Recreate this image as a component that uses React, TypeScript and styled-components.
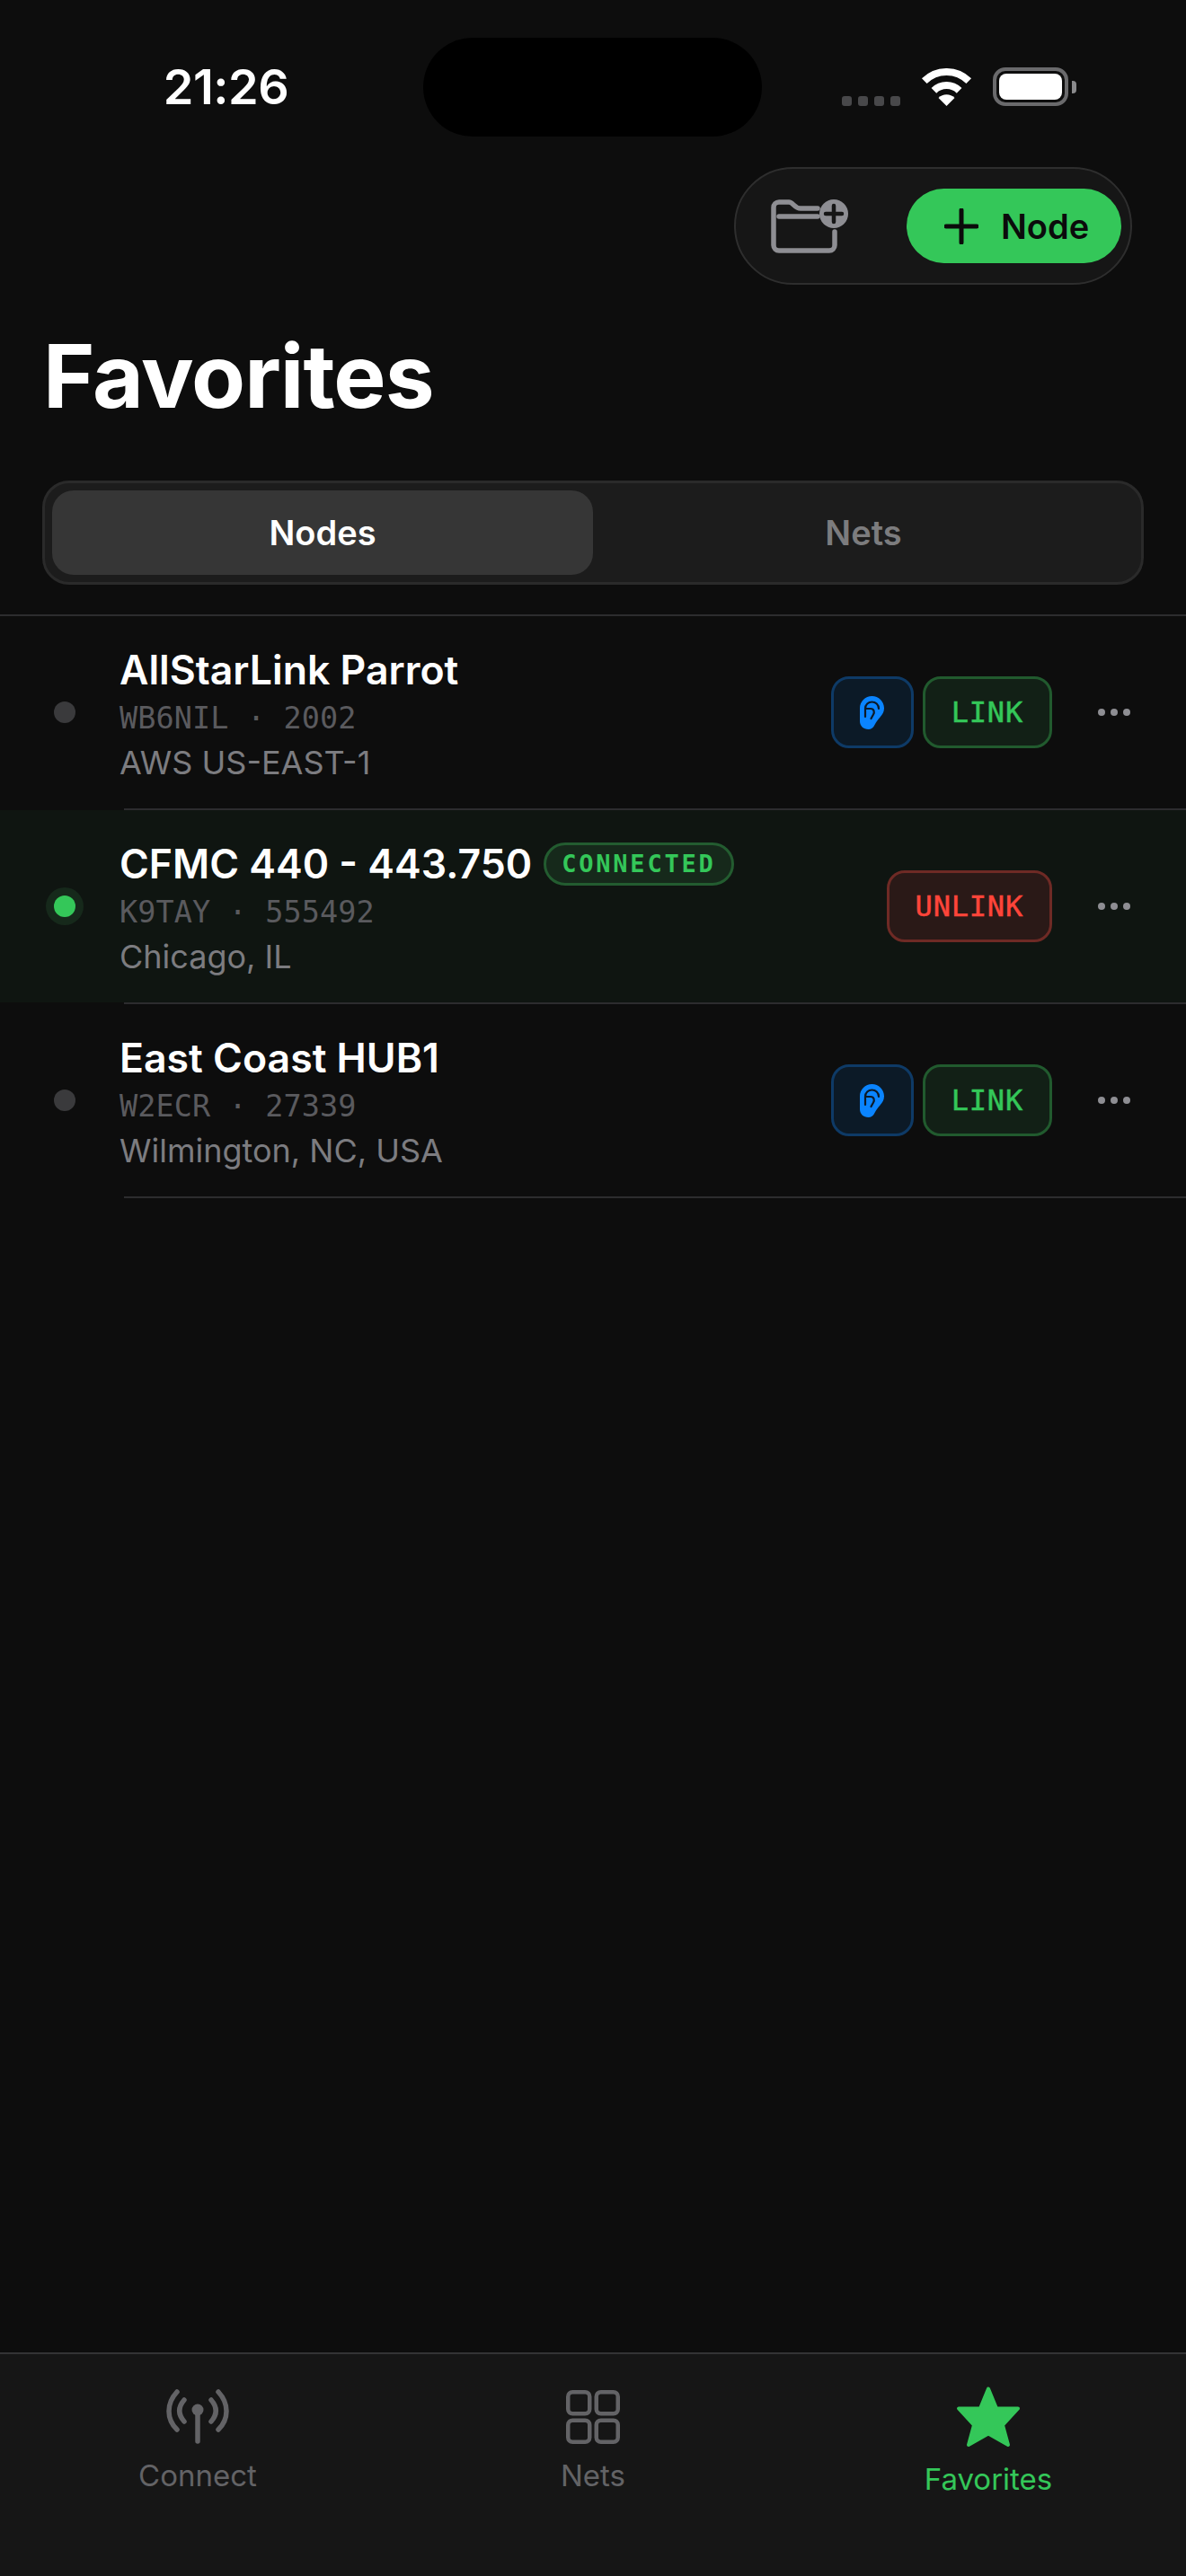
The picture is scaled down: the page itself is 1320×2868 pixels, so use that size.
import React from "react";
import styled, { createGlobalStyle } from "styled-components";

const GlobalStyle = createGlobalStyle`
  html, body {
    margin: 0;
    padding: 0;
    background: #0d0d0d;
  }
`;

const SANS = `Inter, "Liberation Sans", sans-serif`;
const MONO = `"DejaVu Sans Mono", "Liberation Mono", monospace`;
const GREEN = "#34c759";

const Page = styled.div`
  width: 1320px;
  height: 2868px;
  display: flex;
  flex-direction: column;
  background: #0d0d0d;
  color: #fff;
  font-family: ${SANS};
  overflow: hidden;
`;

const StatusBar = styled.div`
  display: grid;
  grid-template-columns: 471px 377px 1fr;
  padding-top: 42px;
  height: 110px;
`;

const Time = styled.div`
  padding-left: 32px;
  text-align: center;
  font-size: 54px;
  font-weight: 600;
  line-height: 110px;
  letter-spacing: -0.5px;
`;

const Island = styled.div`
  height: 110px;
  border-radius: 55px;
  background: #000;
`;

const StatusIcons = styled.div`
  display: flex;
  align-items: flex-end;
  padding: 33px 0 0 89px;
  height: 43px;
`;

const SignalDots = styled.div`
  display: flex;
  gap: 7px;
  margin-right: 23px;
`;

const SignalDot = styled.span`
  width: 11px;
  height: 11px;
  border-radius: 3px;
  background: #48484a;
`;

const Battery = styled.div`
  display: flex;
  align-items: center;
  margin-left: 23px;
`;

const BatteryBody = styled.div`
  box-sizing: border-box;
  width: 84px;
  height: 43px;
  padding: 3px;
  border: 4px solid #6a6a6c;
  border-radius: 14px;
`;

const BatteryFill = styled.div`
  height: 100%;
  border-radius: 8px;
  background: #fff;
`;

const BatteryNub = styled.div`
  width: 5px;
  height: 14px;
  margin-left: 4px;
  border-radius: 0 4px 4px 0;
  background: #8a8a8c;
`;

const ActionRow = styled.div`
  display: flex;
  justify-content: flex-end;
  padding: 34px 60px 0 0;
`;

const ActionPill = styled.div`
  box-sizing: border-box;
  width: 443px;
  height: 131px;
  display: flex;
  align-items: center;
  justify-content: space-between;
  padding: 0 10px 0 39px;
  border: 2px solid #2e2e2e;
  border-radius: 66px;
  background: #161616;
`;

const AddNode = styled.div`
  box-sizing: border-box;
  width: 239px;
  height: 83px;
  display: flex;
  align-items: center;
  gap: 25px;
  padding-left: 42px;
  border-radius: 42px;
  background: ${GREEN};
  color: #0b0b0b;
  font-size: 38px;
  font-weight: 600;
`;

const PageTitle = styled.h1`
  margin: 43px 0 0 48px;
  font-size: 98px;
  line-height: 118px;
  font-weight: 700;
  letter-spacing: -1px;
`;

const Segmented = styled.div`
  box-sizing: border-box;
  display: flex;
  height: 116px;
  margin: 57px 47px 0;
  padding: 8px;
  border: 3px solid #2a2a2a;
  border-radius: 30px;
  background: #1c1c1c;
`;

const Segment = styled.div<{ $active?: boolean }>`
  flex: 1;
  display: flex;
  align-items: center;
  justify-content: center;
  border-radius: 24px;
  background: ${(p) => (p.$active ? "#363636" : "transparent")};
  color: ${(p) => (p.$active ? "#fff" : "#7c7c7e")};
  font-size: 38px;
  font-weight: 600;
`;

const Divider = styled.div<{ $inset?: boolean }>`
  height: 2px;
  margin-left: ${(p) => (p.$inset ? "138px" : "0")};
  background: #2c2c2e;
`;

const HeaderDivider = styled(Divider)`
  margin-top: 33px;
`;

const Row = styled.div<{ $connected?: boolean }>`
  height: 214px;
  display: flex;
  align-items: center;
  padding: 0 62px 0 51px;
  background: ${(p) => (p.$connected ? "#0f1511" : "transparent")};
`;

const DotCell = styled.div`
  width: 42px;
  margin-right: 40px;
  display: flex;
  justify-content: center;
`;

const StatusDot = styled.div<{ $on?: boolean }>`
  width: 24px;
  height: 24px;
  border-radius: 50%;
  background: ${(p) => (p.$on ? GREEN : "#3a3a3c")};
  box-shadow: ${(p) => (p.$on ? "0 0 0 9px #16291b" : "none")};
`;

const RowText = styled.div`
  flex: 1;
  min-width: 0;
  padding-top: 3px;
`;

const TitleLine = styled.div`
  display: flex;
  align-items: center;
  gap: 13px;
  height: 60px;
`;

const NodeName = styled.div`
  font-size: 44.6px;
  font-weight: 600;
  white-space: nowrap;
`;

const ConnectedBadge = styled.div`
  box-sizing: border-box;
  height: 48px;
  display: flex;
  align-items: center;
  padding: 0 17px;
  border: 3px solid #235c30;
  border-radius: 24px;
  background: #16291b;
  color: ${GREEN};
  font-family: ${MONO};
  font-size: 27px;
  font-weight: 700;
  letter-spacing: 2.8px;
`;

const Callsign = styled.div`
  font-family: ${MONO};
  font-size: 33.5px;
  letter-spacing: 0.1px;
  line-height: 48px;
  color: #5a5a5e;
  white-space: pre;
`;

const Location = styled.div`
  font-size: 36px;
  line-height: 50px;
  color: #7c7c80;
`;

const RowActions = styled.div`
  display: flex;
  align-items: center;
  gap: 10px;
`;

const EarButton = styled.div`
  box-sizing: border-box;
  width: 92px;
  height: 80px;
  display: flex;
  align-items: center;
  justify-content: center;
  border: 3px solid #0e3a66;
  border-radius: 20px;
  background: #0c1a27;
`;

const LinkButton = styled.div<{ $danger?: boolean }>`
  box-sizing: border-box;
  height: 80px;
  padding: 0 29px;
  display: flex;
  align-items: center;
  border: 3px solid ${(p) => (p.$danger ? "#6e2a25" : "#215a2e")};
  border-radius: 20px;
  background: ${(p) => (p.$danger ? "#2a1917" : "#122016")};
  color: ${(p) => (p.$danger ? "#ff453a" : GREEN)};
  font-family: ${MONO};
  font-size: 32px;
  letter-spacing: 0.8px;
  -webkit-text-stroke: 0.5px currentColor;
`;

const MoreDots = styled.div`
  display: flex;
  gap: 6px;
  margin-left: 41px;
`;

const MoreDot = styled.span`
  width: 8px;
  height: 8px;
  border-radius: 50%;
  background: #8e8e93;
`;

const Spacer = styled.div`
  flex: 1;
`;

const TabBar = styled.div`
  box-sizing: border-box;
  height: 249px;
  display: grid;
  grid-template-columns: repeat(3, 1fr);
  padding-top: 35px;
  border-top: 2px solid #333335;
  background: #161616;
`;

const TabItem = styled.div<{ $active?: boolean }>`
  display: flex;
  flex-direction: column;
  align-items: center;
  gap: 15px;
  color: ${(p) => (p.$active ? GREEN : "#636366")};
  font-size: 33px;
  line-height: 40px;
`;

const FolderPlusIcon = () => (
  <svg width="88" height="60" viewBox="0 0 88 60" fill="none">
    <path
      d="M71 36V51a6 6 0 0 1-6 6H9a6 6 0 0 1-6-6V9a6 6 0 0 1 6-6H20C25 3 26 10 33 10H52M9 19H52"
      stroke="#8e8e93"
      strokeWidth="5.5"
      strokeLinecap="round"
    />
    <circle cx="70" cy="16" r="16" fill="#8e8e93" />
    <path d="M70 7V25M61 16H79" stroke="#161616" strokeWidth="4.5" strokeLinecap="round" />
  </svg>
);

const PlusIcon = () => (
  <svg width="38" height="40" viewBox="0 0 38 40" fill="none">
    <path d="M19 2V38M2 20H36" stroke="#0b0b0b" strokeWidth="5" strokeLinecap="round" />
  </svg>
);

const WifiIcon = () => (
  <svg width="57" height="42" viewBox="0 0 57 42">
    <path d="M3.8 14.2A35 35 0 0 1 53.2 14.2" fill="none" stroke="#fff" strokeWidth="8" />
    <path d="M14.4 24.8A20 20 0 0 1 42.6 24.8" fill="none" stroke="#fff" strokeWidth="8" />
    <path d="M28.5 42L19.5 33A12.7 12.7 0 0 1 37.5 33Z" fill="#fff" />
  </svg>
);

const EarIcon = () => (
  <svg width="27" height="37" viewBox="0 0 27 37">
    <path
      d="M13.5 0C21 0 27 6 27 13.5C27 18 25 20.5 22.5 23.5C20 26.5 18.5 28 16.5 32C15 35.5 12.5 37 9.5 37C4 37 0 33 0 28V13.5C0 6 6 0 13.5 0Z"
      fill="#0a84ff"
    />
    <path
      d="M6 23V14C6 9.5 9.5 6.5 13.5 6.5C17.5 6.5 21 9.5 21 14M6.5 14H12C16 14 16.5 18 15 20.5L12.5 25"
      fill="none"
      stroke="#0c1a27"
      strokeWidth="2.2"
      strokeLinecap="round"
    />
  </svg>
);

const AntennaIcon = () => (
  <svg width="70" height="65" viewBox="0 0 70 65" fill="none">
    <g stroke="#636366" strokeWidth="5.5" strokeLinecap="round">
      <path d="M12 7C0 20 0 37 12 49M58 7C70 20 70 37 58 49" />
      <path d="M20 16C13 24 13 32 20 40M50 16C57 24 57 32 50 40" />
      <path d="M35 27V62" />
    </g>
    <circle cx="35" cy="27" r="6.5" fill="#636366" />
  </svg>
);

const GridIcon = () => (
  <svg width="60" height="65" viewBox="0 0 60 65" fill="none">
    <g stroke="#636366" strokeWidth="4.5">
      <rect x="2.25" y="7.25" width="24" height="24" rx="5" />
      <rect x="33.75" y="7.25" width="24" height="24" rx="5" />
      <rect x="2.25" y="38.75" width="24" height="24" rx="5" />
      <rect x="33.75" y="38.75" width="24" height="24" rx="5" />
    </g>
  </svg>
);

const StarIcon = () => (
  <svg width="72" height="69" viewBox="0 0 72 69">
    <path
      d="M36 3.5L45 25.5H69L52 44L58 66L36 53.5L14 66L20 44L3 25.5H27Z"
      fill={GREEN}
      stroke={GREEN}
      strokeWidth="4"
      strokeLinejoin="round"
    />
  </svg>
);

interface FavoriteNode {
  name: string;
  callsign: string;
  location: string;
  connected?: boolean;
}

const nodes: FavoriteNode[] = [
  { name: "AllStarLink Parrot", callsign: "WB6NIL · 2002", location: "AWS US-EAST-1" },
  { name: "CFMC 440 - 443.750", callsign: "K9TAY · 555492", location: "Chicago, IL", connected: true },
  { name: "East Coast HUB1", callsign: "W2ECR · 27339", location: "Wilmington, NC, USA" },
];

const App: React.FC = () => (
  <Page>
    <GlobalStyle />
    <StatusBar>
      <Time>21:26</Time>
      <Island />
      <StatusIcons>
        <SignalDots>
          {[0, 1, 2, 3].map((i) => (
            <SignalDot key={i} />
          ))}
        </SignalDots>
        <WifiIcon />
        <Battery>
          <BatteryBody>
            <BatteryFill />
          </BatteryBody>
          <BatteryNub />
        </Battery>
      </StatusIcons>
    </StatusBar>

    <ActionRow>
      <ActionPill>
        <FolderPlusIcon />
        <AddNode>
          <PlusIcon />
          Node
        </AddNode>
      </ActionPill>
    </ActionRow>

    <PageTitle>Favorites</PageTitle>

    <Segmented>
      <Segment $active>Nodes</Segment>
      <Segment>Nets</Segment>
    </Segmented>

    <HeaderDivider />
    {nodes.map((node) => (
      <React.Fragment key={node.name}>
        <Row $connected={node.connected}>
          <DotCell>
            <StatusDot $on={node.connected} />
          </DotCell>
          <RowText>
            <TitleLine>
              <NodeName>{node.name}</NodeName>
              {node.connected && <ConnectedBadge>CONNECTED</ConnectedBadge>}
            </TitleLine>
            <Callsign>{node.callsign}</Callsign>
            <Location>{node.location}</Location>
          </RowText>
          <RowActions>
            {!node.connected && (
              <EarButton>
                <EarIcon />
              </EarButton>
            )}
            <LinkButton $danger={node.connected}>{node.connected ? "UNLINK" : "LINK"}</LinkButton>
            <MoreDots>
              <MoreDot />
              <MoreDot />
              <MoreDot />
            </MoreDots>
          </RowActions>
        </Row>
        <Divider $inset />
      </React.Fragment>
    ))}

    <Spacer />

    <TabBar>
      <TabItem>
        <AntennaIcon />
        Connect
      </TabItem>
      <TabItem>
        <GridIcon />
        Nets
      </TabItem>
      <TabItem $active>
        <StarIcon />
        Favorites
      </TabItem>
    </TabBar>
  </Page>
);

export default App;
